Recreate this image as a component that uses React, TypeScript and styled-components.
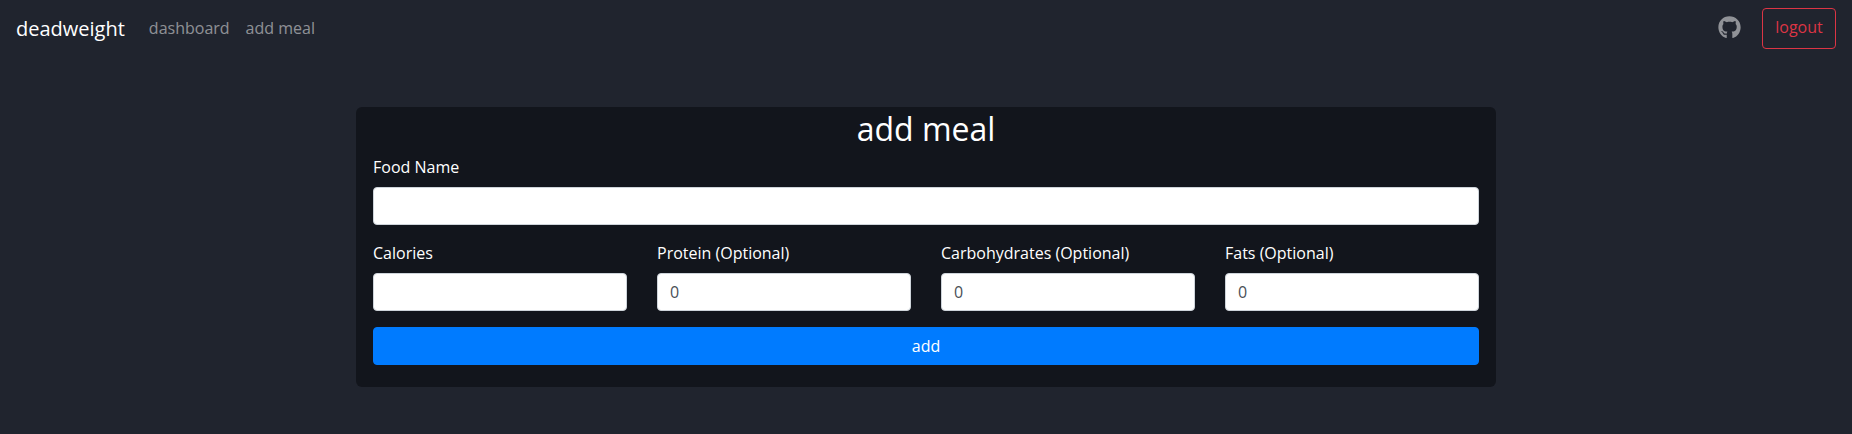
import React from "react";
import styled, { createGlobalStyle } from "styled-components";
import { FaGithub } from "react-icons/fa";

const GlobalStyle = createGlobalStyle`
  *, *::before, *::after { box-sizing: border-box; }
  body {
    margin: 0;
    background: #20242e;
    color: #fff;
    font: 400 16px/1.5 "Open Sans", sans-serif;
  }
`;

const Navbar = styled.nav`
  display: flex;
  align-items: center;
  height: 57px;
  padding: 0 16px;
`;

const Brand = styled.a`
  margin-right: 16px;
  font-size: 20px;
  line-height: 30px;
  color: #fff;
`;

const NavLink = styled.a`
  padding: 7px 8px 8px;
  color: rgba(255, 255, 255, 0.5);
`;

const NavEnd = styled.div`
  display: flex;
  align-items: center;
  margin-left: auto;
`;

const GithubLink = styled.a`
  display: flex;
  margin-right: 21px;
  padding-bottom: 3px;
  color: rgba(255, 255, 255, 0.5);
`;

const Button = styled.button`
  display: block;
  border: 1px solid;
  border-radius: 4px;
  font: inherit;
`;

const LogoutButton = styled(Button)`
  width: 74px;
  height: 41px;
  padding: 0 0 3px;
  border-color: #dc3545;
  background: transparent;
  color: #dc3545;
`;

const SubmitButton = styled(Button)`
  width: 100%;
  height: 38px;
  padding: 6px 12px;
  border-color: #007bff;
  background: #007bff;
  color: #fff;
`;

const Card = styled.form`
  width: 1140px;
  margin: 50px auto 0;
  padding: 0 17px 22px;
  border-radius: 6px;
  background: #12151c;
`;

const Title = styled.h2`
  margin: 0 0 7px;
  padding-top: 3px;
  font-size: 32px;
  font-weight: 400;
  line-height: 38px;
  text-align: center;
`;

const FieldRow = styled.div`
  display: grid;
  grid-template-columns: repeat(4, 1fr);
  gap: 30px;
`;

const Field = styled.div`
  margin-bottom: 16px;
`;

const Label = styled.label`
  display: block;
  margin-bottom: 8px;
`;

const Input = styled.input`
  display: block;
  width: 100%;
  height: 38px;
  padding: 6px 12px;
  border: 1px solid #ced4da;
  border-radius: 4px;
  background: #fff;
  color: #495057;
  font: inherit;
`;

const macros = [
  { label: "Calories", value: "" },
  { label: "Protein (Optional)", value: "0" },
  { label: "Carbohydrates (Optional)", value: "0" },
  { label: "Fats (Optional)", value: "0" },
];

export default function App() {
  return (
    <>
      <GlobalStyle />
      <Navbar>
        <Brand>deadweight</Brand>
        <NavLink>dashboard</NavLink>
        <NavLink>add meal</NavLink>
        <NavEnd>
          <GithubLink aria-label="GitHub">
            <FaGithub size={23} />
          </GithubLink>
          <LogoutButton type="button">logout</LogoutButton>
        </NavEnd>
      </Navbar>
      <Card>
        <Title>add meal</Title>
        <Field>
          <Label htmlFor="food">Food Name</Label>
          <Input id="food" />
        </Field>
        <FieldRow>
          {macros.map((m) => (
            <Field key={m.label}>
              <Label htmlFor={m.label}>{m.label}</Label>
              <Input id={m.label} defaultValue={m.value} />
            </Field>
          ))}
        </FieldRow>
        <SubmitButton type="button">add</SubmitButton>
      </Card>
    </>
  );
}
